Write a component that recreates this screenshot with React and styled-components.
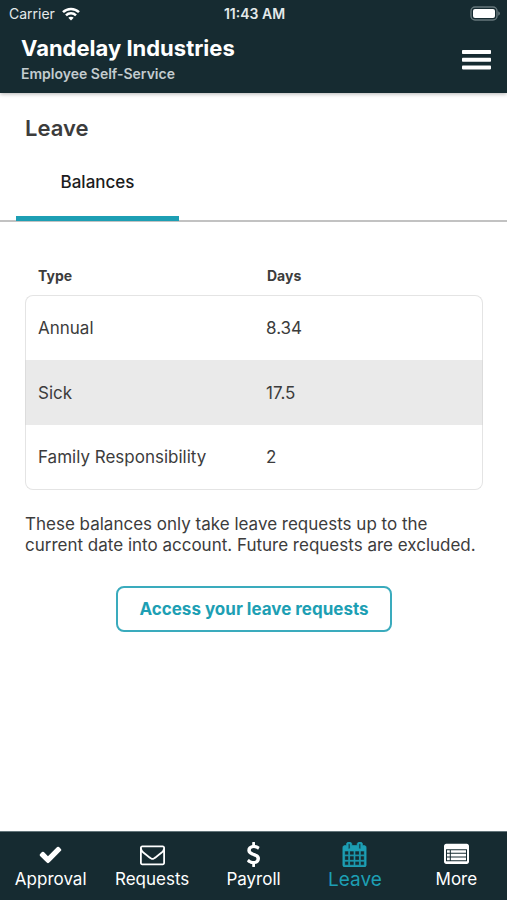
import React from "react";
import styled, { createGlobalStyle } from "styled-components";

const GlobalStyle = createGlobalStyle`
  * {
    box-sizing: border-box;
  }

  body {
    margin: 0;
    background: #ffffff;
    color: #3c3c3c;
    font-family: Inter, "Liberation Sans", sans-serif;
    font-size: 17px;
  }
`;

const Page = styled.div`
  display: flex;
  flex-direction: column;
  min-height: 100vh;
`;

const Header = styled.header`
  background: #162b31;
  color: #ffffff;
  box-shadow: 0 1px 4px rgba(0, 0, 0, 0.3);
`;

const StatusBar = styled.div`
  display: grid;
  grid-template-columns: 1fr auto 1fr;
  align-items: center;
  height: 27px;
  padding: 0 7px 0 9px;
  font-size: 14px;
  color: #e4e9ea;
`;

const Carrier = styled.span`
  display: flex;
  align-items: center;
  gap: 7px;
`;

const Clock = styled.span`
  font-weight: 600;
`;

const Battery = styled.span`
  justify-self: end;
  display: flex;
`;

const TitleBar = styled.div`
  display: flex;
  align-items: center;
  justify-content: space-between;
  height: 66px;
  padding: 0 16px 0 21px;
`;

const Company = styled.div`
  font-size: 22px;
  font-weight: 700;
  line-height: 28px;
`;

const Subtitle = styled.div`
  font-size: 14px;
  font-weight: 600;
  line-height: 24px;
  color: #c3cccf;
`;

const MenuButton = styled.button`
  display: flex;
  padding: 0;
  border: 0;
  background: none;
  color: inherit;
`;

const Main = styled.main`
  flex: 1;
`;

const PageTitle = styled.h1`
  margin: 0;
  padding: 20px 25px 0;
  font-size: 22px;
  font-weight: 600;
  line-height: 30px;
`;

const Tabs = styled.div`
  display: flex;
  margin-top: 4px;
  padding: 0 16px;
  border-bottom: 2px solid #c2c2c2;
`;

const Tab = styled.button`
  min-width: 163px;
  height: 74px;
  margin-bottom: -1px;
  border: 0;
  border-bottom: 5px solid ${(props) => (props.$active ? "#1d9fb4" : "transparent")};
  background: none;
  color: #1c1c1c;
  font-family: inherit;
  font-size: 17px;
  font-weight: 500;
`;

const Content = styled.section`
  padding: 40px 24px 0 25px;
`;

const BalanceTable = styled.table`
  width: 100%;
  table-layout: fixed;
  border-collapse: separate;
  border-spacing: 0;

  th {
    height: 33px;
    padding: 0 13px 6px;
    font-size: 14px;
    font-weight: 700;
    text-align: left;
  }

  td {
    height: 65px;
    padding: 0 12px;
    border: 0 solid #e4e4e4;
  }

  td:first-child {
    border-left-width: 1px;
  }

  td:last-child {
    border-right-width: 1px;
  }

  tbody tr:nth-child(even) td {
    background: #eaeaea;
    border-color: #dcdcdc;
  }

  tbody tr:first-child td {
    border-top-width: 1px;
  }

  tbody tr:last-child td {
    border-bottom-width: 1px;
  }

  tbody tr:first-child td:first-child {
    border-top-left-radius: 8px;
  }

  tbody tr:first-child td:last-child {
    border-top-right-radius: 8px;
  }

  tbody tr:last-child td:first-child {
    border-bottom-left-radius: 8px;
  }

  tbody tr:last-child td:last-child {
    border-bottom-right-radius: 8px;
  }
`;

const Note = styled.p`
  margin: 24px 0 0;
  line-height: 21px;
`;

const AccessButton = styled.button`
  display: block;
  height: 46px;
  margin: 30px auto 0;
  padding: 0 21px;
  border: 2px solid #3aabbd;
  border-radius: 8px;
  background: none;
  color: #1d9fb4;
  font-family: inherit;
  font-size: 17px;
  font-weight: 700;
`;

const BottomNav = styled.nav`
  display: flex;
  height: 69px;
  border-top: 1px solid #63757a;
  background: #162b31;
`;

const NavLink = styled.a`
  flex: 1;
  display: flex;
  flex-direction: column;
  align-items: center;
  padding-top: 10px;
  color: ${(props) => (props.$active ? "#1d9fb4" : "#ffffff")};
  font-size: ${(props) => (props.$active ? "19px" : "17px")};
  line-height: 25px;
  text-decoration: none;
`;

const icons = {
  check:
    "M1671 566q0 40-28 68l-724 724-136 136q-28 28-68 28t-68-28l-136-136-362-362q-28-28-28-68t28-68l136-136q28-28 68-28t68 28l294 295 656-657q28-28 68-28t68 28l136 136q28 28 28 68z",
  envelope:
    "M1664 1504v-768q-32 36-69 66-268 206-426 338-51 43-83 67t-86.5 48.5-102.5 24.5h-2q-48 0-102.5-24.5t-86.5-48.5-83-67q-158-132-426-338-37-30-69-66v768q0 13 9.5 22.5t22.5 9.5h1472q13 0 22.5-9.5t9.5-22.5zm0-1051v-24.5l-.5-13-3-12.5-5.5-9-9-7.5-14-2.5h-1472q-13 0-22.5 9.5t-9.5 22.5q0 168 147 284 193 152 401 317 6 5 35 29.5t46 37.5 44.5 31.5 50.5 27.5 43 9h2q20 0 43-9t50.5-27.5 44.5-31.5 46-37.5 35-29.5q208-165 401-317 54-43 100.5-115.5t46.5-131.5zm128-37v1088q0 66-47 113t-113 47h-1472q-66 0-113-47t-47-113v-1088q0-66 47-113t113-47h1472q66 0 113 47t47 113z",
  dollar:
    "M1362 1185q0 153-99.5 263.5t-258.5 136.5v175q0 14-9 23t-23 9h-135q-13 0-22.5-9.5t-9.5-22.5v-175q-66-9-127.5-31t-101.5-44.5-74-48-46.5-37.5-17.5-18q-17-21-2-41l103-135q7-10 23-12 15-2 24 9l2 2q113 99 243 125 37 8 74 8 81 0 142.5-43t61.5-122q0-28-15-53t-33.5-42-58.5-37.5-66-32-80-32.5q-39-16-61.5-25t-61.5-26.5-62.5-31-56.5-35.5-53.5-42.5-43.5-49-35.5-58-21-66.5-8.5-78q0-138 98-242t255-134v-180q0-13 9.5-22.5t22.5-9.5h135q14 0 23 9t9 23v176q57 6 110.5 23t87 33.5 63.5 37.5 39 29 15 14q17 18 5 38l-81 146q-8 15-23 16-14 3-27-7-3-3-14.5-12t-39-26.5-58.5-32-74.5-26-85.5-11.5q-95 0-155 43t-60 111q0 26 8.5 48t29.5 41.5 39.5 33 56 31 60.5 27 70 27.5q53 20 81 31.5t76 35 75.5 42.5 62 50 53 63.5 31.5 76.5 13 94z",
  calendar:
    "M192 1664h288v-288h-288v288zm352 0h320v-288h-320v288zm-352-352h288v-320h-288v320zm352 0h320v-320h-320v320zm-352-384h288v-288h-288v288zm736 736h320v-288h-320v288zm-384-736h320v-288h-320v288zm768 736h288v-288h-288v288zm-384-352h320v-320h-320v320zm-352-864v-288q0-13-9.5-22.5t-22.5-9.5h-64q-13 0-22.5 9.5t-9.5 22.5v288q0 13 9.5 22.5t22.5 9.5h64q13 0 22.5-9.5t9.5-22.5zm736 864h288v-320h-288v320zm-384-384h320v-288h-320v288zm384 0h288v-288h-288v288zm32-480v-288q0-13-9.5-22.5t-22.5-9.5h-64q-13 0-22.5 9.5t-9.5 22.5v288q0 13 9.5 22.5t22.5 9.5h64q13 0 22.5-9.5t9.5-22.5zm384-64v1280q0 52-38 90t-90 38h-1408q-52 0-90-38t-38-90v-1280q0-52 38-90t90-38h128v-96q0-66 47-113t113-47h64q66 0 113 47t47 113v96h384v-96q0-66 47-113t113-47h64q66 0 113 47t47 113v96h128q52 0 90 38t38 90z",
  list:
    "M160 128h1472q66 0 113 47t47 113v1120q0 66-47 113t-113 47h-1472q-66 0-113-47t-47-113v-1120q0-66 47-113t113-47zm-16 384v864h1504v-864zm72 72h200v192h-200zm272 0h1088v192h-1088zm-272 264h200v192h-200zm272 0h1088v192h-1088zm-272 264h200v192h-200zm272 0h1088v192h-1088z",
};

const NavIcon = ({ name }) => (
  <svg width="25" height="25" viewBox="0 0 1792 1792" aria-hidden="true">
    <path
      d={icons[name]}
      fill="currentColor"
      fillRule="evenodd"
      stroke="currentColor"
      strokeWidth={name === "calendar" ? 50 : 0}
    />
  </svg>
);

const balances = [
  { type: "Annual", days: "8.34" },
  { type: "Sick", days: "17.5" },
  { type: "Family Responsibility", days: "2" },
];

const navItems = [
  { label: "Approval", icon: "check" },
  { label: "Requests", icon: "envelope" },
  { label: "Payroll", icon: "dollar" },
  { label: "Leave", icon: "calendar", active: true },
  { label: "More", icon: "list" },
];

const App = () => {
  return (
    <Page>
      <GlobalStyle />
      <Header>
        <StatusBar>
          <Carrier>
            Carrier
            <svg width="18" height="14" viewBox="0 0 18 14" fill="none" stroke="#fff" strokeWidth="2.5">
              <path d="M1 5.2a11.3 11.3 0 0 1 16 0" />
              <path d="M4 8.3a7.1 7.1 0 0 1 10 0" />
              <path d="M6.3 10.8a3.7 3.7 0 0 1 5.4 0L9 13.6z" fill="#fff" stroke="none" />
            </svg>
          </Carrier>
          <Clock>11:43 AM</Clock>
          <Battery>
            <svg width="30" height="15" viewBox="0 0 30 15">
              <rect x="1" y="1" width="26" height="13" rx="4" fill="none" stroke="#66777b" strokeWidth="1.4" />
              <rect x="3" y="3" width="22" height="9" rx="2" fill="#fff" />
              <path d="M28.2 5.3q1.8 .8 1.8 2.2t-1.8 2.2z" fill="#66777b" />
            </svg>
          </Battery>
        </StatusBar>
        <TitleBar>
          <div>
            <Company>Vandelay Industries</Company>
            <Subtitle>Employee Self-Service</Subtitle>
          </div>
          <MenuButton aria-label="Menu">
            <svg width="29" height="20" viewBox="0 0 29 20" fill="#fff">
              <rect width="29" height="4" rx="0.8" />
              <rect y="7.7" width="29" height="4" rx="0.8" />
              <rect y="15.4" width="29" height="4" rx="0.8" />
            </svg>
          </MenuButton>
        </TitleBar>
      </Header>

      <Main>
        <PageTitle>Leave</PageTitle>
        <Tabs role="tablist">
          <Tab role="tab" aria-selected="true" $active>
            Balances
          </Tab>
        </Tabs>
        <Content>
          <BalanceTable>
            <thead>
              <tr>
                <th>Type</th>
                <th>Days</th>
              </tr>
            </thead>
            <tbody>
              {balances.map((row) => (
                <tr key={row.type}>
                  <td>{row.type}</td>
                  <td>{row.days}</td>
                </tr>
              ))}
            </tbody>
          </BalanceTable>
          <Note>
            These balances only take leave requests up to the current date into
            account. Future requests are excluded.
          </Note>
          <AccessButton>Access your leave requests</AccessButton>
        </Content>
      </Main>

      <BottomNav>
        {navItems.map((item) => (
          <NavLink
            key={item.label}
            href={`#${item.label.toLowerCase()}`}
            $active={item.active}
          >
            <NavIcon name={item.icon} />
            {item.label}
          </NavLink>
        ))}
      </BottomNav>
    </Page>
  );
};

export default App;
